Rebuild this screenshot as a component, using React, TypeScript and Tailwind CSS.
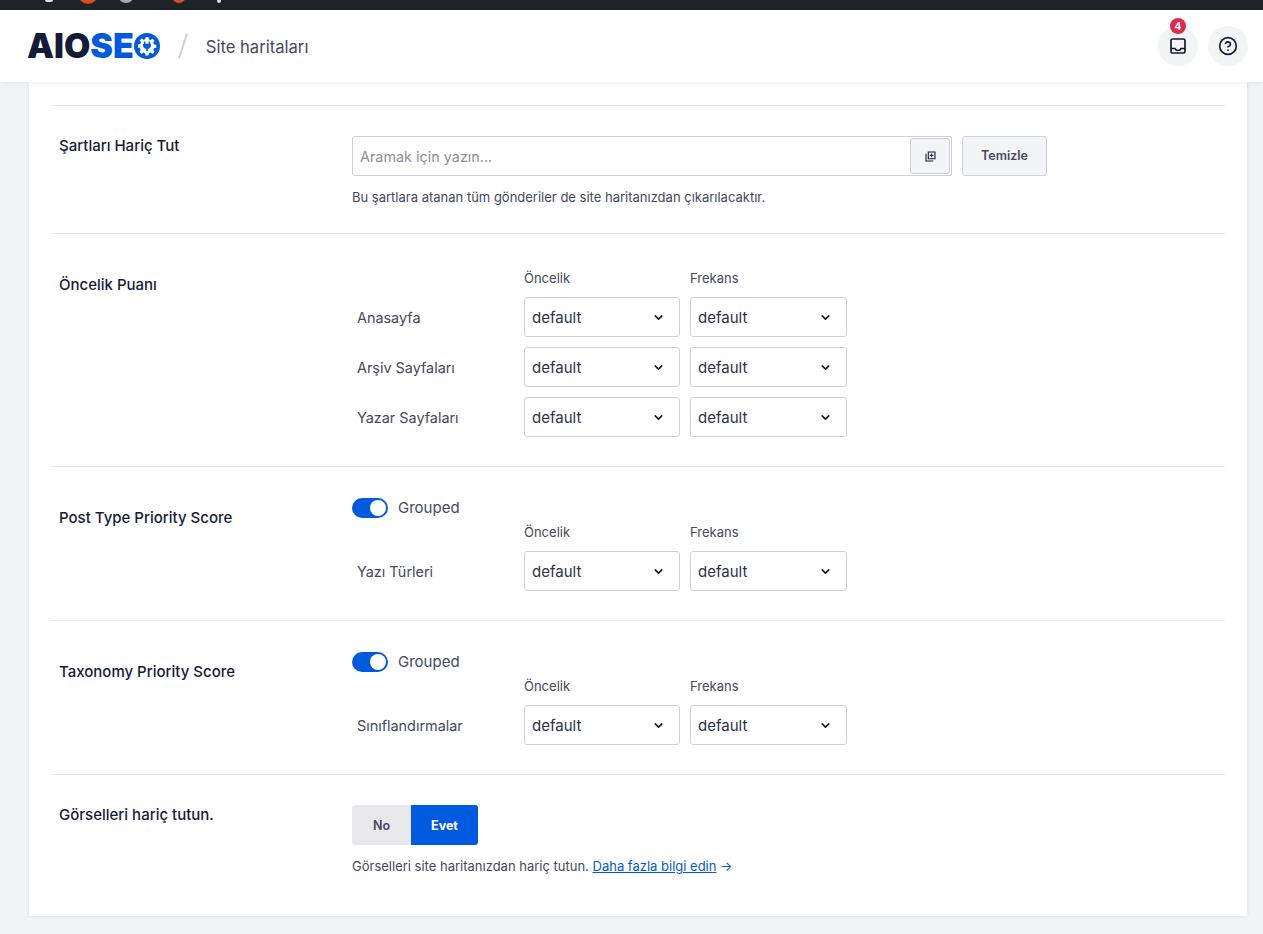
import { ChevronDown, CircleHelp } from 'lucide-react';

const FONT = "font-['Inter','Noto_Sans',sans-serif]";

function SelectBox({ className }: { className: string }) {
  return (
    <div className={`flex h-10 items-center justify-between rounded-[3px] border border-[#d0d1d7] bg-white pl-[7px] pr-[14px] text-[15px] text-[#2c324c] ${className}`}>
      <span className="pt-[2px]">default</span>
      <ChevronDown size={13} strokeWidth={3} className="text-[#141b38]" />
    </div>
  );
}

function ColumnLabels() {
  return (
    <div className="flex w-[495px] pl-[172px] text-[13px] leading-[16px] text-[#434960]">
      <span className="w-[166px]">Öncelik</span>
      <span>Frekans</span>
    </div>
  );
}

function PriorityRow({ label }: { label: string }) {
  return (
    <div className="flex w-[495px] items-center">
      <span className="w-[172px] pl-[5px] pt-px text-[14.4px] text-[#434960]">{label}</span>
      <div className="flex flex-1 gap-[10px]">
        <SelectBox className="w-[156px]" />
        <SelectBox className="flex-1" />
      </div>
    </div>
  );
}

function Toggle() {
  return (
    <div className="flex items-center gap-[10px]">
      <div className="flex h-5 w-9 items-center justify-end rounded-full bg-[#005ae0] pr-[2px]">
        <div className="h-4 w-4 rounded-full bg-white" />
      </div>
      <span className="text-[15px] leading-[20px] text-[#434960]">Grouped</span>
    </div>
  );
}

function SettingRow({ title, className, children }: { title: string; className: string; children: React.ReactNode }) {
  return (
    <div className={`flex border-t border-[#e8e8eb] pl-2 ${className}`}>
      <div className="w-[293px] shrink-0 text-[15px] font-medium leading-[20px] text-[#141b38]">{title}</div>
      <div className="flex-1">{children}</div>
    </div>
  );
}

function GroupedSection({ title, label }: { title: string; label: string }) {
  return (
    <SettingRow title={title} className="h-[154px] pt-[41px]">
      <div className="-mt-[10px]">
        <Toggle />
        <div className="mt-[6px]">
          <ColumnLabels />
        </div>
        <div className="mt-[11px]">
          <PriorityRow label={label} />
        </div>
      </div>
    </SettingRow>
  );
}

function Logo() {
  return (
    <div className="flex items-center">
      <span className="text-[34px] font-black leading-none text-[#141b38]">AIO</span>
      <span className="text-[34px] font-black leading-none text-[#005ae0]">SE</span>
      <svg width="26" height="26" viewBox="0 0 26 26">
        <circle cx="13" cy="13" r="13" fill="#005ae0" />
        <path
          fill="#fff"
          d="M11.5 4h3l.4 2.3 1.7.7 1.9-1.3 2.1 2.1-1.3 1.9.7 1.7 2.3.4v3l-2.3.4-.7 1.7 1.3 1.9-2.1 2.1-1.9-1.3-1.7.7-.4 2.3h-3l-.4-2.3-1.7-.7-1.9 1.3-2.1-2.1 1.3-1.9-.7-1.7L4 14.5v-3l2.3-.4.7-1.7-1.3-1.9 2.1-2.1 1.9 1.3 1.7-.7z"
        />
        <path fill="#005ae0" d="M10 8.5h1.4v2.2h3.2V8.5H16v2.2h1v1.6c0 2-1.2 3.3-3.2 3.6V18h-1.6v-2.1C10.200 15.600 9 14.300 9 12.300v-1.600h1z" />
      </svg>
    </div>
  );
}

export default function App() {
  return (
    <div className={`min-h-[934px] bg-[#f3f4f5] ${FONT}`}>
      <div className="flex h-[10px] items-start overflow-hidden bg-[#1d2327]">
        <div className="ml-[45px] h-[2px] w-[8px] shrink-0 rounded-b-full bg-[#dcdcde]" />
        <div className="ml-[25px] -mt-[16px] h-5 w-5 shrink-0 rounded-full bg-[#d54e21]" />
        <div className="ml-[20px] -mt-[13px] h-4 w-4 shrink-0 rounded-full bg-[#a7aaad]" />
        <div className="ml-[38px] -mt-[11px] h-[14px] w-[14px] shrink-0 rounded-full bg-[#d54e21]" />
        <div className="ml-[31px] -mt-px h-1 w-1 shrink-0 rounded-full bg-[#dcdcde]" />
      </div>

      <header className="relative z-10 flex h-[72px] items-center justify-between bg-white pl-[27px] pr-[15px] shadow-[0_2px_6px_rgba(0,0,0,0.05)]">
        <div className="flex items-center">
          <Logo />
          <div className="ml-[22px] h-[26px] w-[2px] rotate-[18deg] bg-[#d0d1d7]" />
          <span className="ml-[22px] pt-[2px] text-[16.6px] text-[#434960]">Site haritaları</span>
        </div>
        <div className="flex items-center gap-[10px]">
          <div className="relative flex h-10 w-10 items-center justify-center rounded-full bg-[#f3f4f5]">
            <span className="absolute -top-[8px] left-[12px] flex h-4 w-4 items-center justify-center rounded-full bg-[#df2a4a] text-[10px] font-bold text-white">
              4
            </span>
            <svg width="18" height="18" viewBox="0 0 18 18" fill="none" stroke="#141b38" strokeWidth="1.7">
              <rect x="2" y="2" width="14" height="14" rx="1.5" />
              <path d="M2 11.500h4c.5 1.500 1.500 2 3 2s2.500-.5 3-2h4" />
            </svg>
          </div>
          <div className="flex h-10 w-10 items-center justify-center rounded-full bg-[#f3f4f5]">
            <CircleHelp size={20} strokeWidth={2} className="text-[#141b38]" />
          </div>
        </div>
      </header>

      <main className="ml-[29px] mr-[16px] h-[834px] bg-white px-[22px] pt-[23px] shadow-[0_0_4px_rgba(0,0,0,0.1)]">
        <SettingRow title="Şartları Hariç Tut" className="h-[128px] pt-[30px]">
          <div className="flex gap-[10px]">
            <div className="flex h-10 w-[600px] items-center justify-between rounded-[3px] border border-[#d0d1d7] pl-[7px] pr-[1px]">
              <span className="pt-px text-[14.4px] text-[#8c8f9a]">Aramak için yazın...</span>
              <div className="flex h-[36px] w-10 items-center justify-center rounded-[3px] border border-[#d0d1d7] bg-[#f3f4f5]">
                <svg width="11" height="11" viewBox="0 0 12 12" fill="#141b38">
                  <path d="M3 0.500h8.500V9H3zM4.200 1.700v6.100h6.100V1.700zM6.700 2.700h1.100v1.500h1.500v1.100H7.800v1.500H6.700V5.300H5.200V4.200h1.500zM0.500 3H1.700v7.300H9v1.200H0.500z" />
                </svg>
              </div>
            </div>
            <div className="flex h-10 w-[85px] items-center justify-center rounded-[3px] border border-[#d0d1d7] bg-[#f3f4f5] text-[12.5px] font-semibold text-[#434960]">
              Temizle
            </div>
          </div>
          <p className="mt-[13px] text-[13px] leading-[16px] text-[#434960]">
            Bu şartlara atanan tüm gönderiler de site haritanızdan çıkarılacaktır.
          </p>
        </SettingRow>

        <SettingRow title="Öncelik Puanı" className="h-[233px] pt-[41px]">
          <div className="-mt-[5px]">
            <ColumnLabels />
            <div className="mt-[11px] flex flex-col gap-[10px]">
              <PriorityRow label="Anasayfa" />
              <PriorityRow label="Arşiv Sayfaları" />
              <PriorityRow label="Yazar Sayfaları" />
            </div>
          </div>
        </SettingRow>

        <GroupedSection title="Post Type Priority Score" label="Yazı Türleri" />
        <GroupedSection title="Taxonomy Priority Score" label="Sınıflandırmalar" />

        <SettingRow title="Görselleri hariç tutun." className="pt-[30px]">
          <div className="flex h-10 w-[126px] overflow-hidden rounded-[3px] text-[12.5px] font-semibold">
            <div className="flex w-[59px] items-center justify-center bg-[#e8e8eb] pt-[2px] text-[#434960]">No</div>
            <div className="flex flex-1 items-center justify-center bg-[#005ae0] pt-[2px] font-bold text-white">Evet</div>
          </div>
          <p className="mt-[13px] text-[13px] leading-[16px] text-[#434960]">
            Görselleri site haritanızdan hariç tutun.{' '}
            <span className="text-[#005ae0] underline">Daha fazla bilgi edin</span>{' '}
            <span className="text-[#005ae0]">→</span>
          </p>
        </SettingRow>
      </main>
    </div>
  );
}
